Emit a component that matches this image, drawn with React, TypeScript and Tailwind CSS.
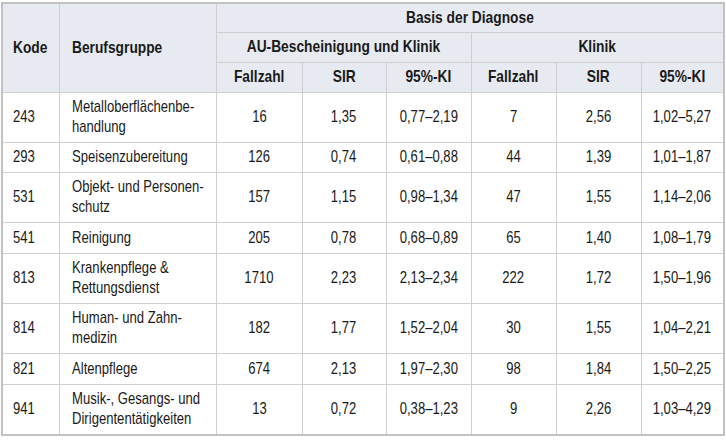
import React from "react";

const rows: [string, string[], string, string, string, string, string, string][] = [
  ["243", ["Metalloberflächenbe-", "handlung"], "16", "1,35", "0,77–2,19", "7", "2,56", "1,02–5,27"],
  ["293", ["Speisenzubereitung"], "126", "0,74", "0,61–0,88", "44", "1,39", "1,01–1,87"],
  ["531", ["Objekt- und Personen-", "schutz"], "157", "1,15", "0,98–1,34", "47", "1,55", "1,14–2,06"],
  ["541", ["Reinigung"], "205", "0,78", "0,68–0,89", "65", "1,40", "1,08–1,79"],
  ["813", ["Krankenpflege &", "Rettungsdienst"], "1710", "2,23", "2,13–2,34", "222", "1,72", "1,50–1,96"],
  ["814", ["Human- und Zahn-", "medizin"], "182", "1,77", "1,52–2,04", "30", "1,55", "1,04–2,21"],
  ["821", ["Altenpflege"], "674", "2,13", "1,97–2,30", "98", "1,84", "1,50–2,25"],
  ["941", ["Musik-, Gesangs- und", "Dirigententätigkeiten"], "13", "0,72", "0,38–1,23", "9", "2,26", "1,03–4,29"],
];

const heights = ["h-[50px]", "h-[30px]", "h-[50px]", "h-[31px]", "h-[50px]", "h-[50px]", "h-[31px]", "h-[51px]"];

function L({ children }: { children: React.ReactNode }) {
  return <span className="inline-block scale-x-[0.77] origin-left">{children}</span>;
}
function C({ children }: { children: React.ReactNode }) {
  return <span className="inline-block scale-x-[0.77] origin-center">{children}</span>;
}
function BL({ children }: { children: React.ReactNode }) {
  return <span className="inline-block scale-x-[0.81] origin-left">{children}</span>;
}
function BC({ children }: { children: React.ReactNode }) {
  return <span className="inline-block scale-x-[0.81] origin-center">{children}</span>;
}

export default function App() {
  const font = { fontFamily: '"Liberation Sans", Arial, sans-serif' };
  const cell = "border border-[#cfcfcf] px-0 py-0 whitespace-nowrap";
  return (
    <div className="w-[726px] h-[446px] bg-white pt-[2px] pl-[1px]" style={font}>
      <table className="table-fixed border-collapse w-[722px] text-[17px] text-[#1a1a1a] border-2 border-[#c2c2c2] leading-[20px]">
        <colgroup>
          <col className="w-[57px]" />
          <col className="w-[157px]" />
          <col className="w-[86px]" />
          <col className="w-[84px]" />
          <col className="w-[85px]" />
          <col className="w-[85px]" />
          <col className="w-[85px]" />
          <col className="w-[83px]" />
        </colgroup>
        <thead className="bg-[#e7ebf1]">
          <tr className="h-[29px]">
            <th rowSpan={3} className={`${cell} text-left pl-[10px] font-bold`}><BL>Kode</BL></th>
            <th rowSpan={3} className={`${cell} text-left pl-[12px] font-bold`}><BL>Berufsgruppe</BL></th>
            <th colSpan={6} className={`${cell} text-center font-bold`}><BC>Basis der Diagnose</BC></th>
          </tr>
          <tr className="h-[30px]">
            <th colSpan={3} className={`${cell} text-center font-bold`}><BC>AU-Bescheinigung und Klinik</BC></th>
            <th colSpan={3} className={`${cell} text-center font-bold`}><BC>Klinik</BC></th>
          </tr>
          <tr className="h-[30px]">
            {["Fallzahl", "SIR", "95%-KI", "Fallzahl", "SIR", "95%-KI"].map((t, i) => (
              <th key={i} className={`${cell} text-center font-bold`}><BC>{t}</BC></th>
            ))}
          </tr>
        </thead>
        <tbody>
          {rows.map((r, i) => (
            <tr key={r[0]} className={heights[i]}>
              <td className={`${cell} pl-[10px]`}><L>{r[0]}</L></td>
              <td className={`${cell} pl-[12px]`}>
                <span className="inline-block scale-x-[0.77] origin-left">
                  {r[1].map((l, j) => (
                    <span key={j} className="block">{l}</span>
                  ))}
                </span>
              </td>
              {[r[2], r[3], r[4], r[5], r[6], r[7]].map((v, j) => (
                <td key={j} className={`${cell} text-center`}><C>{v}</C></td>
              ))}
            </tr>
          ))}
        </tbody>
      </table>
    </div>
  );
}
